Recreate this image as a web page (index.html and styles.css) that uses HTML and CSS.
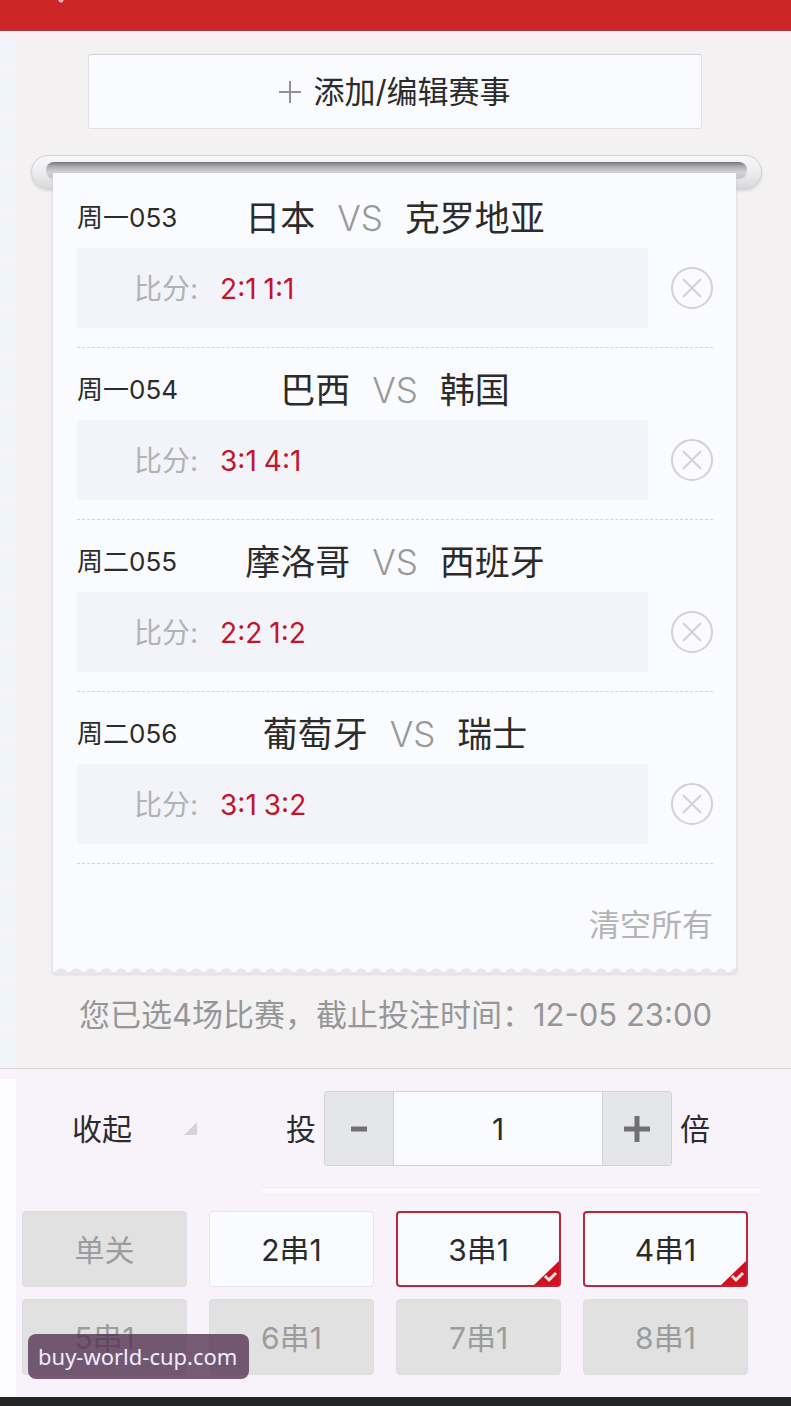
FILE: index.html
```html
<!doctype html>
<html lang="zh-CN">
<head>
  <meta charset="utf-8">
  <title>投注单</title>
  <meta name="viewport" content="width=device-width, initial-scale=1">
  <link rel="stylesheet" href="styles.css">
</head>

<body>

  <header class="topbar"></header>

  <main class="slip">
    <button type="button" class="add">
      <svg width="22" height="22" viewBox="0 0 22 22" aria-hidden="true"><path d="M11 0v22M0 11h22"/></svg>
      添加/编辑赛事
    </button>

    <div class="slot"></div>

    <section class="paper">
      <ul class="matches">
        <li class="match">
          <div class="match-head">
            <span class="match-no">周一053</span>
            <h2 class="teams">日本 <span class="vs">VS</span> 克罗地亚</h2>
          </div>
          <div class="match-body">
            <p class="pick">比分: <span class="scores"><b>2:1</b><b>1:1</b></span></p>
            <button type="button" class="remove" aria-label="删除">
              <svg width="42" height="42" viewBox="0 0 42 42"><circle cx="21" cy="21" r="20"/><path d="M12 12l18 18M30 12L12 30"/></svg>
            </button>
          </div>
        </li>
        <li class="match">
          <div class="match-head">
            <span class="match-no">周一054</span>
            <h2 class="teams">巴西 <span class="vs">VS</span> 韩国</h2>
          </div>
          <div class="match-body">
            <p class="pick">比分: <span class="scores"><b>3:1</b><b>4:1</b></span></p>
            <button type="button" class="remove" aria-label="删除">
              <svg width="42" height="42" viewBox="0 0 42 42"><circle cx="21" cy="21" r="20"/><path d="M12 12l18 18M30 12L12 30"/></svg>
            </button>
          </div>
        </li>
        <li class="match">
          <div class="match-head">
            <span class="match-no">周二055</span>
            <h2 class="teams">摩洛哥 <span class="vs">VS</span> 西班牙</h2>
          </div>
          <div class="match-body">
            <p class="pick">比分: <span class="scores"><b>2:2</b><b>1:2</b></span></p>
            <button type="button" class="remove" aria-label="删除">
              <svg width="42" height="42" viewBox="0 0 42 42"><circle cx="21" cy="21" r="20"/><path d="M12 12l18 18M30 12L12 30"/></svg>
            </button>
          </div>
        </li>
        <li class="match">
          <div class="match-head">
            <span class="match-no">周二056</span>
            <h2 class="teams">葡萄牙 <span class="vs">VS</span> 瑞士</h2>
          </div>
          <div class="match-body">
            <p class="pick">比分: <span class="scores"><b>3:1</b><b>3:2</b></span></p>
            <button type="button" class="remove" aria-label="删除">
              <svg width="42" height="42" viewBox="0 0 42 42"><circle cx="21" cy="21" r="20"/><path d="M12 12l18 18M30 12L12 30"/></svg>
            </button>
          </div>
        </li>
      </ul>
      <div class="paper-foot">
        <button type="button" class="clear">清空所有</button>
      </div>
    </section>

    <p class="notice">您已选4场比赛，截止投注时间：12-05 23:00</p>
  </main>

  <section class="panel">
    <div class="controls">
      <button type="button" class="fold">
        收起
        <svg width="13" height="13" viewBox="0 0 13 13" aria-hidden="true"><path d="M13 0v13H0z"/></svg>
      </button>
      <div class="times">
        <label for="times">投</label>
        <div class="stepper">
          <button type="button" id="minus" aria-label="减少"><svg width="26" height="26" viewBox="0 0 26 26"><path d="M5 13h16"/></svg></button>
          <input type="text" id="times" value="1" inputmode="numeric">
          <button type="button" id="plus" aria-label="增加"><svg width="26" height="26" viewBox="0 0 26 26"><path d="M13 0v26M0 13h26"/></svg></button>
        </div>
        <span>倍</span>
      </div>
    </div>

    <div class="rule"></div>

    <div class="parlays">
      <button type="button" class="parlay" disabled>单关</button>
      <button type="button" class="parlay" aria-pressed="false">2串1</button>
      <button type="button" class="parlay" aria-pressed="true">3串1
        <svg class="tick" width="25" height="24" viewBox="0 0 25 24" aria-hidden="true"><path class="corner" d="M25 0v24H0z"/><path class="mark" d="M11 15l4 4 7-7"/></svg>
      </button>
      <button type="button" class="parlay" aria-pressed="true">4串1
        <svg class="tick" width="25" height="24" viewBox="0 0 25 24" aria-hidden="true"><path class="corner" d="M25 0v24H0z"/><path class="mark" d="M11 15l4 4 7-7"/></svg>
      </button>
      <button type="button" class="parlay" disabled>5串1</button>
      <button type="button" class="parlay" disabled>6串1</button>
      <button type="button" class="parlay" disabled>7串1</button>
      <button type="button" class="parlay" disabled>8串1</button>
    </div>

    <a class="site" href="#">buy-world-cup.com</a>
  </section>

  <footer class="bottombar"></footer>

  <script>
    var times = document.querySelector('#times');

    function step(n) {
      var value = parseInt(times.value, 10) || 1;
      times.value = Math.max(1, value + n);
    }

    document.querySelector('#minus').addEventListener('click', function() { step(-1); });
    document.querySelector('#plus').addEventListener('click', function() { step(1); });
  </script>

</body>
</html>
```
FILE: styles.css
```css
* {
  box-sizing:border-box;
}
body {
  margin:0;
  background:#f4f1f3;
  color:#2b2b2b;
  font-size:30px;
  line-height:42px;
  font-family:Inter, 'Noto Sans CJK SC', sans-serif;
}
button,
input {
  margin:0;
  border:0;
  padding:0;
  background:none;
  color:inherit;
  font:inherit;
}
button {
  cursor:pointer;
}
svg {
  display:block;
  fill:none;
}
.topbar {
  height:31px;
  background:radial-gradient(circle at 61px 0, #f3b9bb 2px, transparent 3px) #cd2629;
  border-bottom:1px solid #b5363a;
}

/* betting slip */
.slip {
  padding-top:23px;
  background:linear-gradient(#fbf1f7, transparent 16px),
    repeating-linear-gradient(#f0f4fb 0, #f0f4fb 24px, #f6f4f5 40px, #f0f4fb 48px) 0 0 / 16px 100% no-repeat;
}
.add {
  display:flex;
  align-items:center;
  justify-content:center;
  gap:12px;
  width:calc(100% - 177px);
  height:75px;
  margin:0 89px 26px 88px;
  border:1px solid #e2e0e3;
  border-top-color:#cfd6d5;
  border-radius:3px;
  background:#fafbfe;
  font-size:31px;
}
.add svg {
  stroke:#929292;
  stroke-width:2;
}
.slot {
  height:34px;
  margin:0 29px 0 31px;
  padding:6px 14px;
  border:1px solid #cfd0d1;
  border-radius:17px;
  background:linear-gradient(#f8f8f9, #ededf0 50%, #d9d9db);
  box-shadow:0 2px 3px #d8d5d8;
}
.slot::before {
  content:'';
  display:block;
  height:17px;
  border-radius:8px;
  background:linear-gradient(#747778, #a9abac 25%, #d4d4d5 60%, #c4c4c6);
}
.paper {
  position:relative;
  margin:-16px 55px 0 53px;
  padding:3px 23px 0 24px;
  background:#fafbfe;
  box-shadow:0 0 3px #cdc9d0;
}
/* torn edge */
.paper::after {
  content:'';
  display:block;
  height:6px;
  margin:0 -23px 0 -24px;
  background:radial-gradient(circle at 8px 7px, #e8e6e7 6px, transparent 7px) 0 0 / 15px 6px,
    linear-gradient(transparent 4px, #e8e6e7 4px);
}
.matches {
  margin:0;
  padding:0;
  list-style:none;
}
.match {
  padding-bottom:18px;
  border-bottom:1px dashed #d6d2d4;
}
.match-head {
  display:grid;
  grid-template-columns:1fr auto 1fr;
  align-items:center;
  height:72px;
  padding-top:12px;
}
.match-no {
  font-size:26px;
}
.teams {
  margin:0;
  font-size:35px;
  font-weight:400;
}
.vs {
  margin:0 12px;
  color:#999;
  font-weight:300;
}
.match-body {
  display:flex;
  align-items:center;
  gap:23px;
  padding-bottom:1px;
}
.pick {
  display:flex;
  flex:1;
  align-items:center;
  gap:22px;
  height:80px;
  margin:0;
  padding:2px 0 0 57px;
  background:#f2f4fa;
  color:#b2b2b2;
  font-size:28px;
}
.scores {
  display:flex;
  gap:7px;
  color:#c3142b;
}
.scores b {
  font-weight:400;
}
.remove svg {
  stroke:#d5d0d2;
  stroke-width:2;
}
.paper-foot {
  display:flex;
  align-items:center;
  justify-content:flex-end;
  height:104px;
  padding-top:18px;
}
.clear {
  color:#b4b4b4;
  font-size:31px;
}
.notice {
  margin:0;
  padding:20px 0 32px;
  color:#959797;
  font-size:31px;
  text-align:center;
}

/* multiplier and parlays */
.panel {
  position:relative;
  padding:22px 43px 22px 22px;
  border-top:1px solid #d8d5d8;
  background:linear-gradient(#fcfbfd, #fcfbfd) 0 10px / 16px 100% no-repeat #f8f3fa;
}
.controls {
  display:flex;
  align-items:center;
  justify-content:space-between;
  height:75px;
  padding:0 38px 0 50px;
}
.rule {
  height:6px;
  margin:21px -12px 18px 240px;
  border-top:1px solid #eee8f0;
  background:#fcf9fd;
}
.fold {
  display:flex;
  align-items:center;
  gap:52px;
}
.fold svg {
  fill:#d3d3d5;
}
.times {
  display:flex;
  align-items:center;
  gap:8px;
}
.stepper {
  display:flex;
  height:75px;
  border:1px solid #d2d3d5;
  border-radius:3px;
  background:#fafbfe;
}
.stepper button {
  display:flex;
  align-items:center;
  justify-content:center;
  width:68px;
  background:#e5e6e9;
}
.stepper svg {
  stroke:#707070;
  stroke-width:5;
}
.stepper input {
  width:210px;
  border:solid #d2d3d5;
  border-width:0 1px;
  text-align:center;
}
.parlays {
  display:grid;
  grid-template-columns:repeat(4, 1fr);
  gap:12px 22px;
}
.parlay {
  position:relative;
  height:76px;
  padding-top:2px;
  border:1px solid #e6e4ea;
  border-radius:4px;
  background:#fafbfe;
}
.parlay:disabled {
  border-color:#dddcde;
  background:#e2e1e1;
  color:#9b9c9d;
  cursor:default;
}
.parlay[aria-pressed=true] {
  border:2px solid #b9283a;
}
.tick {
  position:absolute;
  right:0;
  bottom:0;
}
.corner {
  fill:#d20f1c;
}
.mark {
  stroke:#fbe3e4;
  stroke-width:3;
}
.site {
  position:absolute;
  left:28px;
  bottom:18px;
  padding:0 12px 0 10px;
  border-radius:8px;
  background:rgba(82, 48, 80, .78);
  color:#f0eaff;
  font-size:22px;
  line-height:45px;
  font-family:'Noto Sans', sans-serif;
  text-decoration:none;
}
.bottombar {
  height:9px;
  background:#232424;
}
```
